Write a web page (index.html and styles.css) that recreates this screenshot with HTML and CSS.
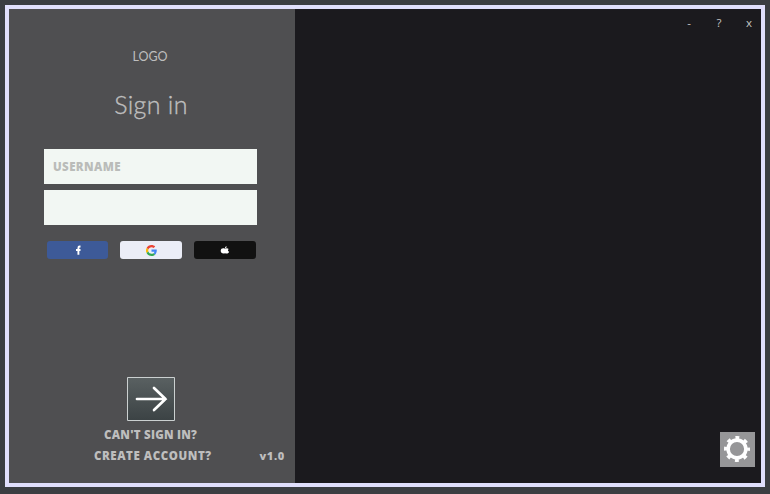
FILE: index.html
```html
<!DOCTYPE html>
<html lang="en">
<head>
<meta charset="utf-8">
<title>Sign in</title>
<link rel="stylesheet" href="styles.css">
</head>
<body>
<main class="window">
  <section class="panel">
    <div class="logo">LOGO</div>
    <h1 class="title">Sign in</h1>
    <form class="fields">
      <input class="field" type="text" placeholder="USERNAME" aria-label="Username">
      <input class="field" type="password" aria-label="Password">
    </form>
    <div class="socials">
      <button class="social facebook" aria-label="Facebook">
        <svg width="8" height="10" viewBox="0 0 8 10"><path d="M6.500 1.500H5.600Q4.400 1.500 4.400 2.900V9.800M2 5H6.500" fill="none" stroke="#fff" stroke-width="1.900"/></svg>
      </button>
      <button class="social google" aria-label="Google">
        <svg width="11" height="11" viewBox="0 0 48 48"><path fill="#ea4335" d="M24 9.500c3.500 0 6.700 1.200 9.200 3.600l6.900-6.900C35.900 2.400 30.500 0 24 0 14.600 0 6.500 5.400 2.600 13.200l8 6.200C12.400 13.700 17.700 9.500 24 9.500z"/><path fill="#4285f4" d="M47 24.500c0-1.600-.2-3.100-.4-4.500H24v9h12.900c-.6 3-2.200 5.500-4.700 7.200l7.700 6C44.400 38 47 31.800 47 24.500z"/><path fill="#fbbc05" d="M10.500 28.600a14.500 14.500 0 0 1 0-9.200l-8-6.200a24 24 0 0 0 0 21.600z"/><path fill="#34a853" d="M24 48c6.500 0 11.900-2.100 15.900-5.800l-7.700-6c-2.200 1.500-4.900 2.300-8.200 2.300-6.300 0-11.600-4.200-13.500-9.900l-8 6.200C6.500 42.600 14.600 48 24 48z"/></svg>
      </button>
      <button class="social apple" aria-label="Apple">
        <svg width="10" height="9" viewBox="0 0 10 9"><path fill="#fff" d="M5 2.300C5 1 5.700.3 6.700.2 6.700 1.400 6 2.200 5 2.300zM5 2.700C6 2.300 7.500 1.900 8.700 3 7.500 3.800 7.700 5.200 9.200 5.700 8.600 7.200 7.300 7.900 5 7.200 2.700 7.900.7 7 .7 4.800.7 2.400 3 1.800 5 2.700z"/></svg>
      </button>
    </div>
    <button class="submit" aria-label="Continue">
      <svg width="48" height="44" viewBox="0 0 48 44"><path d="M10 22H38.500M27 11 38.500 22 27 33" fill="none" stroke="#fff" stroke-width="2.700" stroke-linecap="round"/></svg>
    </button>
    <a class="link help">CAN'T SIGN IN?</a>
    <div class="bottom">
      <a class="link create">CREATE ACCOUNT?</a>
      <span class="link version">v1.0</span>
    </div>
  </section>
  <section class="stage">
    <nav class="controls">
      <span class="control">-</span>
      <span class="control">?</span>
      <span class="control">x</span>
    </nav>
    <button class="settings" aria-label="Settings">
      <svg width="35" height="35" viewBox="-17 -17 35 35"><g fill="none" stroke="#fff"><circle r="8.900" stroke-width="3.600"/><circle r="11.300" stroke-width="3.400" stroke-dasharray="3.800 5.075" stroke-dashoffset="1.900"/></g></svg>
    </button>
  </section>
</main>
</body>
</html>
```
FILE: styles.css
```css
* { box-sizing: border-box; }
body {
  margin: 0;
  height: 494px;
  padding: 5px 5px 7px;
  background: #3b3e42;
  font-family: "Open Sans", "Noto Sans", sans-serif;
  overflow: hidden;
}
button { padding: 0; border: 0; display: flex; align-items: center; justify-content: center; }
svg { display: block; }
.window {
  display: flex;
  width: 760px;
  height: 482px;
  border: 4px solid #e0dffc;
}
.panel {
  display: flex;
  flex-direction: column;
  width: 286px;
  padding: 38px 0 17px;
  background: #4f4f51;
  color: #bebebe;
}
.logo {
  width: 282px;
  line-height: 20px;
  font-family: Lato, sans-serif;
  font-size: 12.5px;
  text-align: center;
}
.title {
  width: 284px;
  margin: 20px 0 0;
  line-height: 34px;
  font-family: Lato, sans-serif;
  font-size: 25px;
  font-weight: 300;
  text-align: center;
  letter-spacing: 0.3px;
  -webkit-text-stroke: 0.35px #bebebe;
}
.fields {
  display: flex;
  flex-direction: column;
  gap: 6px;
  margin: 28px 0 0 35px;
}
.field {
  width: 213px;
  height: 35px;
  padding: 0 9px;
  border: 0;
  background: #f2f7f3;
  color: #555;
  font: 800 11.5px "Open Sans", sans-serif;
  letter-spacing: 0.4px;
}
.field::placeholder { color: #babcb9; opacity: 1; }
.socials { display: flex; gap: 12px; margin: 16px 0 0 38px; }
.social { width: 62px; height: 18px; border-radius: 3px; }
.social.facebook { width: 61px; background: #3d5a98; }
.google { background: #ebedf7; }
.apple { background: #111; }
.submit {
  width: 48px;
  height: 44px;
  margin: auto 0 0 118px;
  background: linear-gradient(#5a6162, #3b4244);
  border-radius: 1px;
  box-shadow: inset 0 0 0 1px #cbd0d0;
}
.link { line-height: 21px; font-size: 11.5px; font-weight: 800; }
.help { margin: 3px 0 0 95px; letter-spacing: 0.25px; }
.bottom { display: flex; justify-content: space-between; height: 21px; padding: 0 10px 0 85px; }
.create { letter-spacing: 0.55px; }
.version { font-size: 11px; letter-spacing: 0.7px; }
.stage {
  display: flex;
  flex: 1;
  flex-direction: column;
  justify-content: space-between;
  align-items: flex-end;
  padding: 4px 6px 16px 0;
  background: #1b1a1e;
}
.controls { display: flex; margin-right: -9px; }
.control {
  width: 30px;
  line-height: 20px;
  font-size: 11.5px;
  text-align: center;
  color: #c5c5c2;
}
.settings { width: 35px; height: 35px; background: #969698; }
```
